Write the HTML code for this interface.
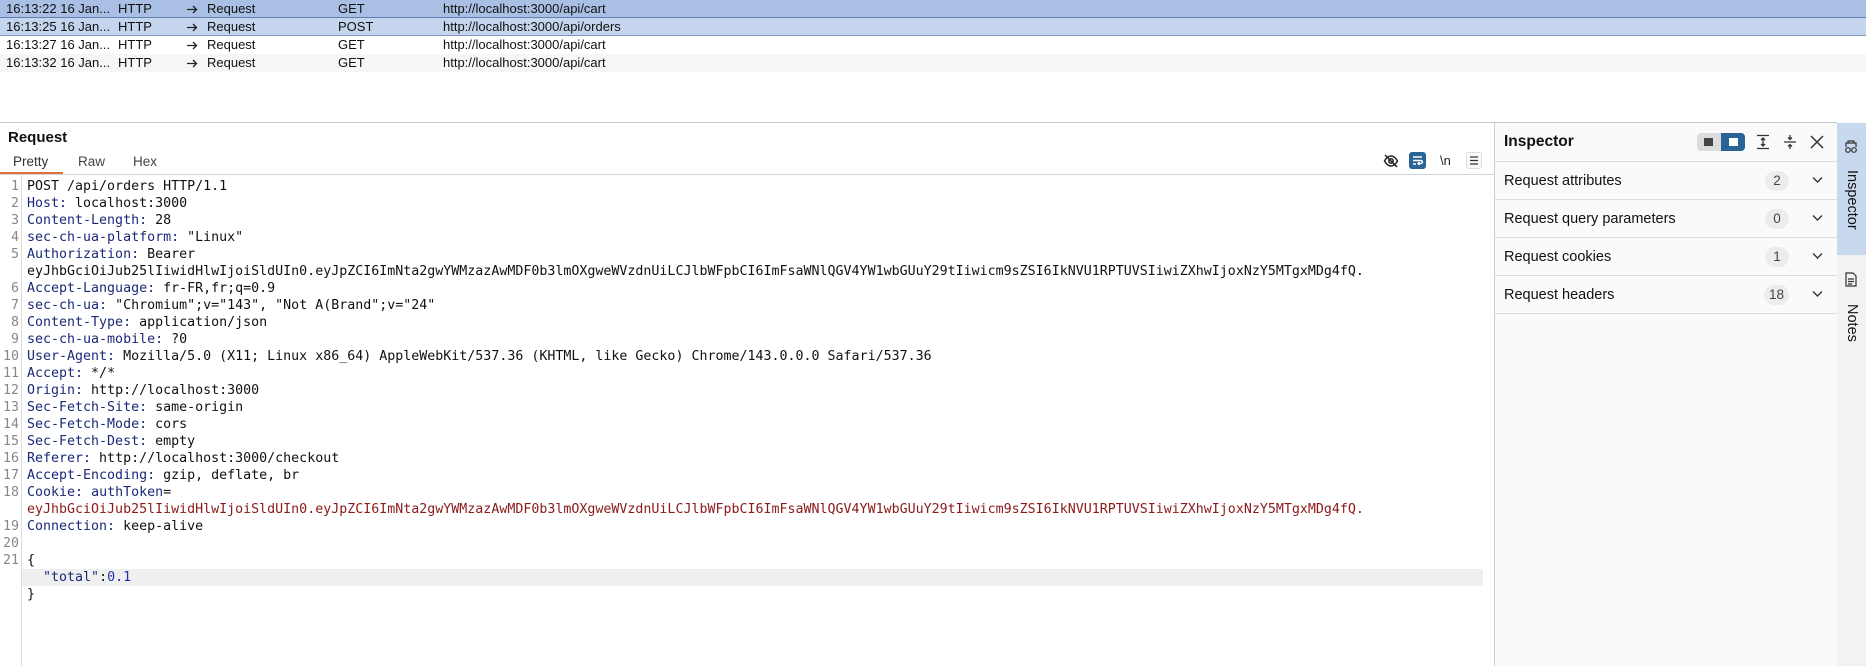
<!DOCTYPE html>
<html><head><meta charset="utf-8"><style>
*{margin:0;padding:0;box-sizing:border-box}
body{width:1866px;height:666px;overflow:hidden;background:#fff;font-family:"Liberation Sans",sans-serif;position:relative;color:#111}
.row{position:absolute;left:0;width:1866px;height:18px;font-size:13px;line-height:18px}
.row span{position:absolute;top:0;white-space:nowrap}
.row svg{position:absolute;left:186px;top:5px}
.mono{font-family:"DejaVu Sans Mono","Liberation Mono",monospace;font-size:13.3px;line-height:17px;white-space:pre}
.ln{position:absolute;left:0;width:19px;text-align:right;color:#888}
.code{position:absolute;left:27px}
.k{color:#1b2a78}
.r{color:#8a1a1a}
.b{color:#2233aa}
.irow{position:absolute;left:1495px;width:342px;height:38px;border-bottom:1px solid #ddd;font-size:14.5px;line-height:38px;padding-left:9px}
.badge{position:absolute;right:48px;top:9px;min-width:24px;height:20px;border-radius:10px;background:#ececec;text-align:center;line-height:20px;font-size:13.5px;color:#444;padding:0 5px}
.chev{position:absolute;right:14px;top:14px}
</style></head><body>
<!-- table -->
<div class="row" style="top:0;background:#a9c0e4;border-bottom:1px solid #5f7fb0"><span style="left:6px">16:13:22 16 Jan...</span><span style="left:118px">HTTP</span><svg width="12" height="9" viewBox="0 0 12 9" fill="none" stroke="#222" stroke-width="1.3"><path d="M1 4.5h9.5M7 1l3.5 3.5L7 8"/></svg><span style="left:207px">Request</span><span style="left:338px">GET</span><span style="left:443px">http://localhost:3000/api/cart</span></div>
<div class="row" style="top:18px;background:#c5d5ee;border-bottom:1px solid #7f98c0"><span style="left:6px">16:13:25 16 Jan...</span><span style="left:118px">HTTP</span><svg width="12" height="9" viewBox="0 0 12 9" fill="none" stroke="#222" stroke-width="1.3"><path d="M1 4.5h9.5M7 1l3.5 3.5L7 8"/></svg><span style="left:207px">Request</span><span style="left:338px">POST</span><span style="left:443px">http://localhost:3000/api/orders</span></div>
<div class="row" style="top:36px;background:#fff"><span style="left:6px">16:13:27 16 Jan...</span><span style="left:118px">HTTP</span><svg width="12" height="9" viewBox="0 0 12 9" fill="none" stroke="#222" stroke-width="1.3"><path d="M1 4.5h9.5M7 1l3.5 3.5L7 8"/></svg><span style="left:207px">Request</span><span style="left:338px">GET</span><span style="left:443px">http://localhost:3000/api/cart</span></div>
<div class="row" style="top:54px;background:#f6f6f6"><span style="left:6px">16:13:32 16 Jan...</span><span style="left:118px">HTTP</span><svg width="12" height="9" viewBox="0 0 12 9" fill="none" stroke="#222" stroke-width="1.3"><path d="M1 4.5h9.5M7 1l3.5 3.5L7 8"/></svg><span style="left:207px">Request</span><span style="left:338px">GET</span><span style="left:443px">http://localhost:3000/api/cart</span></div>
<div style="position:absolute;top:122px;left:0;width:1837px;height:1px;background:#c8c8c8"></div>
<!-- request panel -->
<div style="position:absolute;left:8px;top:128px;font-size:15px;font-weight:bold;line-height:20px">Request</div>
<div style="position:absolute;top:153px;left:13px;font-size:13.5px;line-height:18px;color:#333">Pretty</div>
<div style="position:absolute;top:153px;left:78px;font-size:13.5px;line-height:18px;color:#444">Raw</div>
<div style="position:absolute;top:153px;left:133px;font-size:13.5px;line-height:18px;color:#444">Hex</div>
<div style="position:absolute;top:174px;left:0;width:1494px;height:1px;background:#d4d4d4"></div>
<div style="position:absolute;top:172px;left:0;width:63px;height:2px;background:#e0703a"></div>
<!-- editor icons -->
<svg style="position:absolute;left:1383px;top:153px" width="16" height="16" viewBox="0 0 16 16" fill="none" stroke="#222" stroke-width="1.5"><path d="M1.5 8c2-3.5 4-5 6.5-5s4.5 1.5 6.5 5c-2 3.5-4 5-6.5 5S3.5 11.5 1.5 8z"/><circle cx="8" cy="8" r="2.2"/><path d="M2 2l12 12"/></svg>
<div style="position:absolute;left:1409px;top:152px;width:17px;height:17px;border-radius:3px;background:#2a6496"></div>
<svg style="position:absolute;left:1411px;top:154px" width="13" height="13" viewBox="0 0 13 13" fill="none" stroke="#fff" stroke-width="1.4"><path d="M2 3h9M2 6.5h8a1.5 1.5 0 010 3H7M8.5 8l-1.5 1.5L8.5 11M2 10h3"/></svg>
<div style="position:absolute;left:1440px;top:152px;font-size:13px;line-height:17px;color:#222">\n</div>
<div style="position:absolute;left:1466px;top:152px;width:16px;height:17px;border:1px solid #ddd;border-radius:3px;background:#fafafa"></div>
<svg style="position:absolute;left:1469px;top:155px" width="10" height="11" viewBox="0 0 10 11" stroke="#333" stroke-width="1.3"><path d="M1 2h8M1 5.5h8M1 9h8"/></svg>
<!-- gutter -->
<div style="position:absolute;left:21px;top:175px;width:1px;height:491px;background:#ddd"></div>
<div style="position:absolute;left:22px;top:569px;width:1461px;height:17px;background:#efefef"></div>
<div class="mono" style="position:absolute;left:0;top:178px;width:1494px">
<div class="ln" style="top:0">1</div><div class="code" style="top:0">POST /api/orders HTTP/1.1</div>
<div class="ln" style="top:17px">2</div><div class="code" style="top:17px"><span class="k">Host:</span> localhost:3000</div>
<div class="ln" style="top:34px">3</div><div class="code" style="top:34px"><span class="k">Content-Length:</span> 28</div>
<div class="ln" style="top:51px">4</div><div class="code" style="top:51px"><span class="k">sec-ch-ua-platform:</span> "Linux"</div>
<div class="ln" style="top:68px">5</div><div class="code" style="top:68px"><span class="k">Authorization:</span> Bearer</div>
<div class="code" style="top:85px">eyJhbGciOiJub25lIiwidHlwIjoiSldUIn0.eyJpZCI6ImNta2gwYWMzazAwMDF0b3lmOXgweWVzdnUiLCJlbWFpbCI6ImFsaWNlQGV4YW1wbGUuY29tIiwicm9sZSI6IkNVU1RPTUVSIiwiZXhwIjoxNzY5MTgxMDg4fQ.</div>
<div class="ln" style="top:102px">6</div><div class="code" style="top:102px"><span class="k">Accept-Language:</span> fr-FR,fr;q=0.9</div>
<div class="ln" style="top:119px">7</div><div class="code" style="top:119px"><span class="k">sec-ch-ua:</span> "Chromium";v="143", "Not A(Brand";v="24"</div>
<div class="ln" style="top:136px">8</div><div class="code" style="top:136px"><span class="k">Content-Type:</span> application/json</div>
<div class="ln" style="top:153px">9</div><div class="code" style="top:153px"><span class="k">sec-ch-ua-mobile:</span> ?0</div>
<div class="ln" style="top:170px">10</div><div class="code" style="top:170px"><span class="k">User-Agent:</span> Mozilla/5.0 (X11; Linux x86_64) AppleWebKit/537.36 (KHTML, like Gecko) Chrome/143.0.0.0 Safari/537.36</div>
<div class="ln" style="top:187px">11</div><div class="code" style="top:187px"><span class="k">Accept:</span> */*</div>
<div class="ln" style="top:204px">12</div><div class="code" style="top:204px"><span class="k">Origin:</span> http://localhost:3000</div>
<div class="ln" style="top:221px">13</div><div class="code" style="top:221px"><span class="k">Sec-Fetch-Site:</span> same-origin</div>
<div class="ln" style="top:238px">14</div><div class="code" style="top:238px"><span class="k">Sec-Fetch-Mode:</span> cors</div>
<div class="ln" style="top:255px">15</div><div class="code" style="top:255px"><span class="k">Sec-Fetch-Dest:</span> empty</div>
<div class="ln" style="top:272px">16</div><div class="code" style="top:272px"><span class="k">Referer:</span> http://localhost:3000/checkout</div>
<div class="ln" style="top:289px">17</div><div class="code" style="top:289px"><span class="k">Accept-Encoding:</span> gzip, deflate, br</div>
<div class="ln" style="top:306px">18</div><div class="code" style="top:306px"><span class="k">Cookie:</span> <span class="k">authToken</span>=</div>
<div class="code r" style="top:323px">eyJhbGciOiJub25lIiwidHlwIjoiSldUIn0.eyJpZCI6ImNta2gwYWMzazAwMDF0b3lmOXgweWVzdnUiLCJlbWFpbCI6ImFsaWNlQGV4YW1wbGUuY29tIiwicm9sZSI6IkNVU1RPTUVSIiwiZXhwIjoxNzY5MTgxMDg4fQ.</div>
<div class="ln" style="top:340px">19</div><div class="code" style="top:340px"><span class="k">Connection:</span> keep-alive</div>
<div class="ln" style="top:357px">20</div>
<div class="ln" style="top:374px">21</div><div class="code" style="top:374px">{</div>
<div class="code" style="top:391px">  <span class="k">"total"</span>:<span class="b">0.1</span></div>
<div class="code" style="top:408px">}</div>
</div>
<!-- inspector -->
<div style="position:absolute;left:1494px;top:123px;width:343px;height:543px;background:#fafafa;border-left:1px solid #cfcfcf"></div>
<div style="position:absolute;left:1504px;top:131px;font-size:15.5px;font-weight:bold;line-height:22px">Inspector</div>
<div style="position:absolute;left:1697px;top:133px;width:48px;height:18px;border-radius:4px;background:#dcdcdc"></div>
<div style="position:absolute;left:1721px;top:133px;width:24px;height:18px;border-radius:0 4px 4px 0;background:#2a6496"></div>
<div style="position:absolute;left:1704px;top:138px;width:9px;height:8px;background:#444"></div>
<div style="position:absolute;left:1729px;top:138px;width:9px;height:8px;background:#fff"></div>
<svg style="position:absolute;left:1756px;top:134px" width="14" height="16" viewBox="0 0 14 16" stroke="#333" stroke-width="1.3" fill="none"><path d="M1 1.5h12M1 14.5h12M7 4v8M5 6l2-2 2 2M5 10l2 2 2-2"/></svg>
<svg style="position:absolute;left:1783px;top:134px" width="14" height="16" viewBox="0 0 14 16" stroke="#333" stroke-width="1.3" fill="none"><path d="M1 8h12M7 1v4M5 3.5L7 5.5 9 3.5M7 15v-4M5 12.5L7 10.5 9 12.5"/></svg>
<svg style="position:absolute;left:1810px;top:135px" width="14" height="14" viewBox="0 0 14 14" stroke="#333" stroke-width="1.5"><path d="M1 1l12 12M13 1L1 13"/></svg>
<div style="position:absolute;left:1495px;top:161px;width:342px;height:1px;background:#ddd"></div>
<div class="irow" style="top:162px">Request attributes<span class="badge">2</span><svg class="chev" width="11" height="8" viewBox="0 0 11 8" fill="none" stroke="#333" stroke-width="1.4"><path d="M1 1.5l4.5 4.5L10 1.5"/></svg></div>
<div class="irow" style="top:200px">Request query parameters<span class="badge">0</span><svg class="chev" width="11" height="8" viewBox="0 0 11 8" fill="none" stroke="#333" stroke-width="1.4"><path d="M1 1.5l4.5 4.5L10 1.5"/></svg></div>
<div class="irow" style="top:238px">Request cookies<span class="badge">1</span><svg class="chev" width="11" height="8" viewBox="0 0 11 8" fill="none" stroke="#333" stroke-width="1.4"><path d="M1 1.5l4.5 4.5L10 1.5"/></svg></div>
<div class="irow" style="top:276px">Request headers<span class="badge">18</span><svg class="chev" width="11" height="8" viewBox="0 0 11 8" fill="none" stroke="#333" stroke-width="1.4"><path d="M1 1.5l4.5 4.5L10 1.5"/></svg></div>
<!-- sidebar -->
<div style="position:absolute;left:1837px;top:123px;width:29px;height:543px;background:#f2f2f2"></div>
<div style="position:absolute;left:1837px;top:123px;width:29px;height:132px;background:#c8d8ee"></div>
<svg style="position:absolute;left:1844px;top:140px" width="14" height="14" viewBox="0 0 14 14" fill="none" stroke="#333" stroke-width="1.2"><circle cx="4" cy="10" r="2.3"/><circle cx="10" cy="10" r="2.3"/><path d="M2 7V3h10v4M4 3V1h6v2"/></svg>
<div style="position:absolute;left:1843px;top:170px;font-size:14.5px;writing-mode:vertical-rl;line-height:17px">Inspector</div>
<svg style="position:absolute;left:1845px;top:272px" width="12" height="15" viewBox="0 0 12 15" fill="none" stroke="#333" stroke-width="1.2"><path d="M1 1h7l3 3v10H1z M3 7h6M3 9.5h6M3 12h4"/></svg>
<div style="position:absolute;left:1843px;top:304px;font-size:14.5px;writing-mode:vertical-rl;line-height:17px">Notes</div>
</body></html>
